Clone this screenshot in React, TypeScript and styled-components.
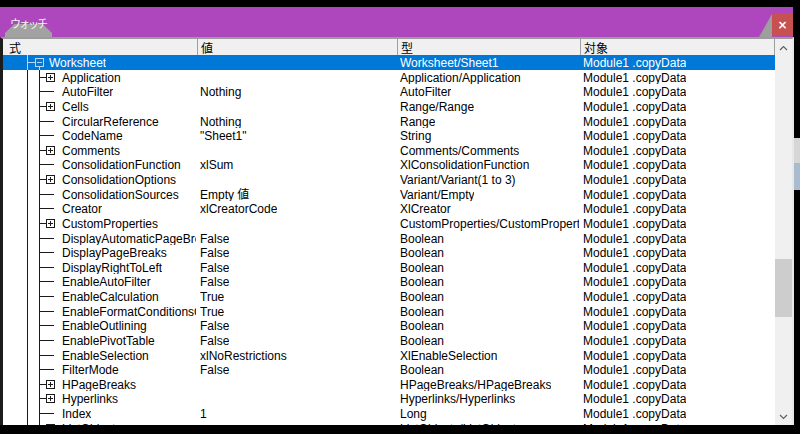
import React from 'react';
import styled, { createGlobalStyle } from 'styled-components';

const ROW_H = 14.625;

type Kind = 'open' | 'closed' | 'leaf';

interface WatchRow {
  name: string;
  value?: string;
  type: string;
  kind: Kind;
}

const CONTEXT = 'Module1 .copyData';

const rows: WatchRow[] = [
  { name: 'Worksheet', type: 'Worksheet/Sheet1', kind: 'open' },
  { name: 'Application', type: 'Application/Application', kind: 'closed' },
  { name: 'AutoFilter', value: 'Nothing', type: 'AutoFilter', kind: 'leaf' },
  { name: 'Cells', type: 'Range/Range', kind: 'closed' },
  { name: 'CircularReference', value: 'Nothing', type: 'Range', kind: 'leaf' },
  { name: 'CodeName', value: '"Sheet1"', type: 'String', kind: 'leaf' },
  { name: 'Comments', type: 'Comments/Comments', kind: 'closed' },
  { name: 'ConsolidationFunction', value: 'xlSum', type: 'XlConsolidationFunction', kind: 'leaf' },
  { name: 'ConsolidationOptions', type: 'Variant/Variant(1 to 3)', kind: 'closed' },
  { name: 'ConsolidationSources', value: 'Empty 値', type: 'Variant/Empty', kind: 'leaf' },
  { name: 'Creator', value: 'xlCreatorCode', type: 'XlCreator', kind: 'leaf' },
  { name: 'CustomProperties', type: 'CustomProperties/CustomProperties', kind: 'closed' },
  { name: 'DisplayAutomaticPageBreaks', value: 'False', type: 'Boolean', kind: 'leaf' },
  { name: 'DisplayPageBreaks', value: 'False', type: 'Boolean', kind: 'leaf' },
  { name: 'DisplayRightToLeft', value: 'False', type: 'Boolean', kind: 'leaf' },
  { name: 'EnableAutoFilter', value: 'False', type: 'Boolean', kind: 'leaf' },
  { name: 'EnableCalculation', value: 'True', type: 'Boolean', kind: 'leaf' },
  { name: 'EnableFormatConditionsCalculation', value: 'True', type: 'Boolean', kind: 'leaf' },
  { name: 'EnableOutlining', value: 'False', type: 'Boolean', kind: 'leaf' },
  { name: 'EnablePivotTable', value: 'False', type: 'Boolean', kind: 'leaf' },
  { name: 'EnableSelection', value: 'xlNoRestrictions', type: 'XlEnableSelection', kind: 'leaf' },
  { name: 'FilterMode', value: 'False', type: 'Boolean', kind: 'leaf' },
  { name: 'HPageBreaks', type: 'HPageBreaks/HPageBreaks', kind: 'closed' },
  { name: 'Hyperlinks', type: 'Hyperlinks/Hyperlinks', kind: 'closed' },
  { name: 'Index', value: '1', type: 'Long', kind: 'leaf' },
  { name: 'ListObjects', type: 'ListObjects/ListObjects', kind: 'closed' },
];

const GlobalStyle = createGlobalStyle`
  html, body {
    margin: 0;
    padding: 0;
    background: #000;
  }
  body {
    font-family: 'Liberation Sans', 'Noto Sans CJK JP', Arial, sans-serif;
  }
`;

const Screen = styled.div`
  width: 800px;
  height: 434px;
  box-sizing: border-box;
  padding-top: 7px;
  background: #000;
  display: flex;
  flex-direction: column;
  overflow: hidden;
`;

const TitleBar = styled.div`
  width: 793px;
  height: 30px;
  flex-shrink: 0;
  box-sizing: border-box;
  padding-left: 5px;
  background: #ae46bd;
  display: flex;
  align-items: flex-end;
  justify-content: space-between;
`;

const Tab = styled.div`
  position: relative;
  width: 47px;
  height: 22px;
  box-sizing: border-box;
  padding: 2px 0 0 5px;

  &::before {
    content: '';
    position: absolute;
    left: 0;
    right: 0;
    bottom: 0;
    height: 13px;
    background: #a2a2a2;
    clip-path: polygon(20% 0, 80% 0, 100% 70%, 100% 100%, 0 100%, 0 70%);
  }
`;

const TabLabel = styled.span`
  position: relative;
  display: block;
  color: #f4f4f4;
  font-family: 'Noto Sans CJK JP', sans-serif;
  font-size: 11px;
  line-height: 12px;
  letter-spacing: -2px;
`;

const CloseArea = styled.div`
  display: flex;
  align-items: flex-end;
  height: 100%;
`;

const Stair = styled.div`
  width: 13px;
  height: 23px;
  background: #9e9e9e;
  clip-path: polygon(100% 0, 100% 100%, 0 100%);
`;

const CloseButton = styled.div`
  width: 21px;
  height: 22px;
  margin-bottom: 1px;
  background: #c75050;
  color: #fff;
  font-family: 'DejaVu Sans', sans-serif;
  font-weight: bold;
  font-size: 12px;
  display: flex;
  align-items: center;
  justify-content: center;
`;

const Body = styled.div`
  height: 388px;
  display: flex;
  flex-shrink: 0;
`;

const Frame = styled.div`
  width: 794px;
  box-sizing: border-box;
  border-top: 2px solid #9c9c9c;
  border-left: 3px solid #1c1c1c;
  border-right: 2px solid #e8e8e8;
  display: flex;
  background: #fff;
`;

const List = styled.div`
  flex: 1;
  display: flex;
  flex-direction: column;
  overflow: hidden;
  font-size: 12px;
  color: #000;
`;

const columns = '195px 200px 183px 194px';

const Header = styled.div`
  display: grid;
  grid-template-columns: ${columns};
  height: 16px;
  flex-shrink: 0;
  background: #f0f0f0;
`;

const HeaderCell = styled.div`
  padding-left: 3px;
  border-right: 1px solid #a0a0a0;
  font-family: 'Noto Sans CJK JP', sans-serif;
  font-size: 12px;
  line-height: 17px;
  overflow: hidden;
  white-space: nowrap;

  &:first-child {
    padding-left: 6px;
  }
`;

const Row = styled.div<{ $selected?: boolean }>`
  display: grid;
  grid-template-columns: ${columns};
  height: ${ROW_H}px;
  line-height: ${ROW_H + 2}px;
  flex-shrink: 0;
  overflow: hidden;
  background: ${(p) => (p.$selected ? '#0078d7' : 'transparent')};
  color: ${(p) => (p.$selected ? '#fff' : '#000')};
`;

const NameCell = styled.div`
  display: flex;
  align-items: stretch;
  min-width: 0;
  padding-right: 2px;
`;

const Cell = styled.div`
  display: flex;
  min-width: 0;
  padding: 0 2px;
`;

const Text = styled.span`
  min-width: 0;
  overflow: hidden;
  white-space: nowrap;
  text-overflow: clip;
`;

const Scrollbar = styled.div`
  width: 17px;
  background: #f0f0f0;
  display: flex;
  flex-direction: column;
`;

const ArrowButton = styled.div`
  height: 17px;
  flex-shrink: 0;
  display: flex;
  align-items: center;
  justify-content: center;
  color: #606060;
`;

const Track = styled.div`
  flex: 1;
`;

const Thumb = styled.div`
  margin-top: 203px;
  height: 58px;
  background: #cdcdcd;
`;

const RightStrip = styled.div`
  width: 6px;
  display: flex;
  flex-direction: column;
`;

const Patch = styled.div<{ $h: number; $bg: string; $mt?: number }>`
  height: ${(p) => p.$h}px;
  margin-top: ${(p) => p.$mt ?? 0}px;
  background: ${(p) => p.$bg};
`;

const TreeLines = ({ kind, selected }: { kind: Kind; selected: boolean }) => {
  const h = ROW_H;
  const mid = 7.5;
  const stroke = selected ? '#bcd6f2' : '#1a1a1a';
  const width = kind === 'open' ? 46 : 59;
  return (
    <svg
      width={width}
      height={h}
      viewBox={`0 0 ${width} ${h}`}
      style={{ flexShrink: 0, display: 'block' }}
    >
      <g stroke={stroke} strokeWidth={1} fill="none" shapeRendering="crispEdges">
        <line x1={24.5} y1={0} x2={24.5} y2={h} />
        {kind === 'open' && (
          <>
            <line x1={24.5} y1={mid} x2={32} y2={mid} />
            <rect x={32.5} y={3.5} width={8} height={8} />
            <line x1={34} y1={mid} x2={39} y2={mid} />
            <line x1={36.5} y1={12} x2={36.5} y2={h} />
          </>
        )}
        {kind === 'closed' && (
          <>
            <line x1={36.5} y1={0} x2={36.5} y2={h} />
            <line x1={36.5} y1={mid} x2={43} y2={mid} />
            <rect x={43.5} y={3.5} width={8} height={8} />
            <line x1={45} y1={mid} x2={50} y2={mid} />
            <line x1={47.5} y1={5} x2={47.5} y2={10} />
          </>
        )}
        {kind === 'leaf' && (
          <>
            <line x1={36.5} y1={0} x2={36.5} y2={h} />
            <line x1={36.5} y1={mid} x2={51} y2={mid} />
          </>
        )}
      </g>
    </svg>
  );
};

const Chevron = ({ up }: { up?: boolean }) => (
  <svg width={9} height={6} viewBox="0 0 9 6">
    <path
      d={up ? 'M1 5 L4.5 1.5 L8 5' : 'M1 1 L4.5 4.5 L8 1'}
      stroke="currentColor"
      strokeWidth={1.2}
      fill="none"
    />
  </svg>
);

const App = () => {
  return (
    <Screen>
      <GlobalStyle />
      <TitleBar>
        <Tab>
          <TabLabel>ウォッチ</TabLabel>
        </Tab>
        <CloseArea>
          <Stair />
          <CloseButton>×</CloseButton>
        </CloseArea>
      </TitleBar>
      <Body>
        <Frame>
          <List>
            <Header>
              <HeaderCell>式</HeaderCell>
              <HeaderCell>値</HeaderCell>
              <HeaderCell>型</HeaderCell>
              <HeaderCell>対象</HeaderCell>
            </Header>
            {rows.map((r, i) => (
              <Row key={r.name} $selected={i === 0}>
                <NameCell>
                  <TreeLines kind={r.kind} selected={i === 0} />
                  <Text>{r.name}</Text>
                </NameCell>
                <Cell>
                  <Text>{r.value ?? ''}</Text>
                </Cell>
                <Cell>
                  <Text>{r.type}</Text>
                </Cell>
                <Cell>
                  <Text>{CONTEXT}</Text>
                </Cell>
              </Row>
            ))}
          </List>
          <Scrollbar>
            <ArrowButton>
              <Chevron up />
            </ArrowButton>
            <Track>
              <Thumb />
            </Track>
            <ArrowButton>
              <Chevron />
            </ArrowButton>
          </Scrollbar>
        </Frame>
        <RightStrip>
          <Patch $mt={101} $h={25} $bg="#d6d6d6" />
          <Patch $h={27} $bg="#a9bccf" />
        </RightStrip>
      </Body>
    </Screen>
  );
};

export default App;
